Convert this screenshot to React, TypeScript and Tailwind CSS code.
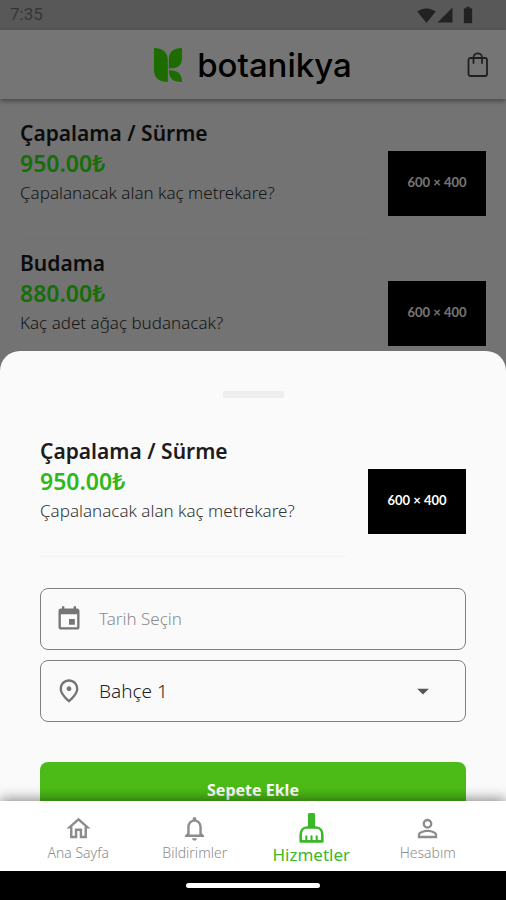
import {
  MdArrowDropDown,
  MdBatteryFull,
  MdEvent,
  MdNotificationsNone,
  MdOutlineHome,
  MdOutlinePlace,
  MdPersonOutline,
  MdSignalCellular4Bar,
  MdSignalWifi4Bar,
} from "react-icons/md";

const services = [
  { name: "Çapalama / Sürme", price: "950.00₺", question: "Çapalanacak alan kaç metrekare?" },
  { name: "Budama", price: "880.00₺", question: "Kaç adet ağaç budanacak?" },
];

const tabs = [
  { label: "Ana Sayfa", icon: MdOutlineHome, active: false },
  { label: "Bildirimler", icon: MdNotificationsNone, active: false },
  { label: "Hizmetler", icon: BrushIcon, active: true },
  { label: "Hesabım", icon: MdPersonOutline, active: false },
];

function BrushIcon({ size }: { size: number }) {
  return (
    <svg viewBox="0 0 32 32" width={size} height={size} fill="none" stroke="currentColor" aria-hidden="true">
      <rect x="12.5" y="1" width="7" height="14" rx="1.5" fill="currentColor" stroke="none" />
      <path
        d="M5.5 28.500V22C5.500 18 8 15 11.500 15H20.500C24 15 26.500 18 26.500 22V28.500Z"
        strokeWidth="2.5"
        strokeLinejoin="round"
      />
      <path d="M11 28V23.500M16 28V23.500M21 28V23.500" strokeWidth="2" strokeLinecap="round" />
    </svg>
  );
}

function ServiceItem({ service, dimmed = false }: { service: (typeof services)[number]; dimmed?: boolean }) {
  return (
    <article className="flex items-center gap-5">
      <div className="mb-[9px] min-w-0 flex-1 border-b border-[#f5f5f5] pb-[30px]">
        <h2 className="text-[21px] leading-[30px] font-semibold text-[#1c1c1c]">{service.name}</h2>
        <p className={`text-[23px] leading-[30px] font-semibold ${dimmed ? "text-[#30f010]" : "text-[#2fb81b]"}`}>{service.price}</p>
        <p className="text-[17px] leading-[30px] font-light text-[#333]">{service.question}</p>
      </div>
      <div className="flex h-[65px] w-[98px] items-center justify-center bg-black font-['Lato',sans-serif] text-[13px] font-bold text-white">
        600 × 400
      </div>
    </article>
  );
}

function Logo() {
  return (
    <div className="flex items-center gap-[15px]">
      <svg viewBox="0 0 28 34" className="h-[34px] w-7 fill-[#40ec00]" aria-hidden="true">
        <path d="M0 0C8.500 0 13.800 4.500 13.800 12V34C5 34 0 30 0 22Z" />
        <path d="M28 0V10C28 17.500 24 20.500 14.800 20.500V12C14.800 4 19 0 28 0Z" />
        <path d="M14.800 22.300C24 22.300 28 26 28 34C19 34 14.800 30.500 14.800 22.300Z" />
      </svg>
      <span className="font-['Inter',sans-serif] text-[33px] leading-10 font-medium text-black">botanikya</span>
    </div>
  );
}

export default function App() {
  return (
    <div className="flex h-screen flex-col overflow-hidden bg-[#fafafa] font-['Noto_Sans',sans-serif]">
      <div className="relative min-h-0 flex-1 overflow-hidden">
        <div className="flex h-[30px] items-center justify-between bg-[#c1c1c1] pr-7 pl-[10px] text-[#4a4a4a]">
          <span className="font-['Roboto',sans-serif] text-[17px] text-[#777]">7:35</span>
          <div className="flex items-center">
            <MdSignalWifi4Bar size={19} />
            <MdSignalCellular4Bar size={18} />
            <MdBatteryFull size={20} className="ml-1" />
          </div>
        </div>

        <header className="flex h-[69px] items-center bg-white px-4 shadow-[0_2px_5px_rgba(0,0,0,0.4)]">
          <div className="w-6" />
          <div className="flex flex-1 justify-center">
            <Logo />
          </div>
          <button type="button" aria-label="Sepet" className="text-[#444]">
            <svg viewBox="0 0 24 28" className="h-7 w-6 fill-none stroke-current stroke-[1.8]" aria-hidden="true">
              <rect x="2.5" y="7" width="18.5" height="18" rx="2" />
              <path d="M7.500 12V6.500C7.500 1 16 1 16 6.500V12" strokeLinecap="round" />
            </svg>
          </button>
        </header>

        <main className="px-5 pt-[19px]">
          {services.map((service) => (
            <ServiceItem key={service.name} service={service} dimmed />
          ))}
        </main>

        <div className="absolute inset-0 bg-black/54" />

        <section className="absolute inset-x-0 -bottom-4 rounded-t-[20px] bg-[#fafafa] px-10 pt-10">
          <div className="mx-auto mb-[38px] h-[7px] w-[61px] bg-[#eee]" />
          <ServiceItem service={services[0]} />

          <form className="mt-[22px]">
            <label className="flex h-[62px] items-center gap-4 rounded-lg border border-[#808080] px-[14px] text-[#757575]">
              <MdEvent size={28} />
              <input
                type="text"
                aria-label="Tarih"
                placeholder="Tarih Seçin"
                className="min-w-0 flex-1 text-[17px] font-light outline-none placeholder:text-[#8c8c8c]"
              />
            </label>
            <label className="mt-[10px] flex h-[62px] items-center gap-4 rounded-lg border border-[#808080] px-[14px] text-[#757575]">
              <MdOutlinePlace size={28} />
              <select aria-label="Bahçe" className="min-w-0 flex-1 appearance-none text-[19px] font-light text-[#222] outline-none">
                <option>Bahçe 1</option>
              </select>
              <MdArrowDropDown size={28} className="mr-[14px] text-[#555]" />
            </label>
            <button type="button" className="mt-10 h-[55px] w-full rounded-lg bg-[#4cbb17] text-base font-bold text-white">
              Sepete Ekle
            </button>
          </form>
        </section>
      </div>

      <nav className="relative z-10 flex h-[70px] bg-white px-5 pt-1 shadow-[0_-2px_12px_rgba(0,0,0,0.45)]">
        {tabs.map(({ label, icon: Icon, active }) => (
          <a
            key={label}
            href="#"
            className={`flex flex-1 flex-col items-center justify-center leading-5 ${active ? "text-[17px] text-[#3db72a]" : "text-sm font-light text-[#8c8c8c]"}`}
          >
            <Icon size={active ? 33 : 29} />
            {label}
          </a>
        ))}
      </nav>
      <footer className="flex h-[29px] items-center justify-center bg-black">
        <div className="h-[5px] w-[134px] rounded-full bg-white" />
      </footer>
    </div>
  );
}
